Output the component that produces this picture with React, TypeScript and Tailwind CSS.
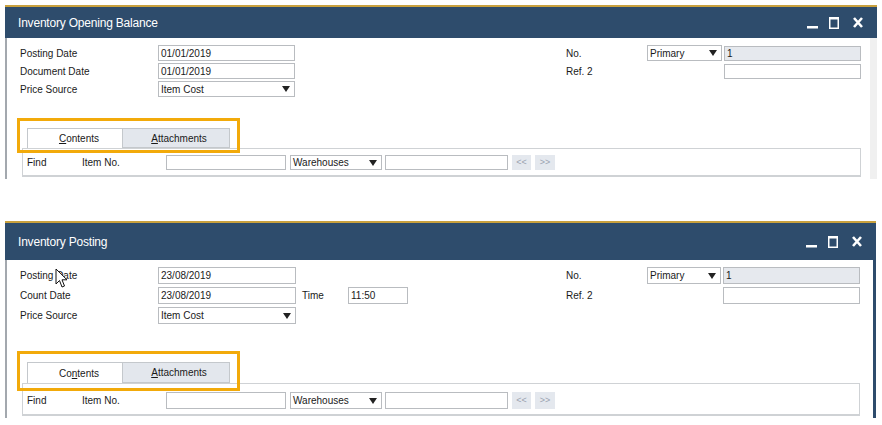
import React from "react";

const FONT = { fontFamily: '"Liberation Sans", Arial, sans-serif' };

function Controls() {
  return (
    <div className="ml-auto flex items-center gap-[11px] pr-[14px]">
      <svg width="11" height="12" viewBox="0 0 11 12">
        <rect x="0" y="9" width="11" height="2.5" fill="#fff" />
      </svg>
      <svg width="10" height="12" viewBox="0 0 10 12" className="mr-[3px]">
        <rect x="0.75" y="0.75" width="8.5" height="10.5" fill="none" stroke="#fff" strokeWidth="1.5" />
        <rect x="0" y="0" width="10" height="2.5" fill="#fff" />
      </svg>
      <svg width="10" height="11" viewBox="0 0 10 11">
        <path d="M1 1 L9 10 M9 1 L1 10" stroke="#fff" strokeWidth="2.6" />
      </svg>
    </div>
  );
}

function Input({ value, w, h, gray }: { value?: string; w: string; h: string; gray?: boolean }) {
  return (
    <div
      className={`${w} ${h} flex items-center border border-[#b9bcc0] pl-[2px] text-[10px] text-[#1a1a1a] ${
        gray ? "bg-[#e6e9ee]" : "bg-white"
      }`}
    >
      {value}
    </div>
  );
}

function Select({ value, w, h }: { value: string; w: string; h: string }) {
  return (
    <div className={`${w} ${h} flex items-center justify-between border border-[#b9bcc0] bg-white pl-[2px] pr-[4px] text-[10px] text-[#1a1a1a]`}>
      <span>{value}</span>
      <svg width="8" height="6" viewBox="0 0 8 6">
        <path d="M0 0 L8 0 L4 6 Z" fill="#222" />
      </svg>
    </div>
  );
}

function FindRow({ h }: { h: string }) {
  return (
    <div className="flex items-center text-[10px] text-[#1a1a1a]">
      <div className="w-[55px]">Find</div>
      <div className="w-[84px]">Item No.</div>
      <Input w="w-[120px]" h={h} />
      <div className="ml-[4px]">
        <Select value="Warehouses" w="w-[92px]" h={h} />
      </div>
      <div className="ml-[3px]">
        <Input w="w-[123px]" h={h} />
      </div>
      <div className={`ml-[4px] flex w-[19px] ${h} items-center justify-center bg-[#e4e8ee] text-[9px] text-[#9aa2ae]`}>&lt;&lt;</div>
      <div className={`ml-[4px] flex w-[20px] ${h} items-center justify-center bg-[#e4e8ee] text-[9px] text-[#9aa2ae]`}>&gt;&gt;</div>
    </div>
  );
}

function Tabs({ second, h }: { second?: boolean; h: string }) {
  return (
    <div className={`ml-[7px] flex ${h} text-[10px] text-[#1a1a1a]`}>
      <div className="flex w-[96px] items-center justify-center border border-b-0 border-[#c4c8cc] bg-white pl-[8px]">
        {second ? (
          <span>
            Co<span className="underline">n</span>tents
          </span>
        ) : (
          <span>
            <span className="underline">C</span>ontents
          </span>
        )}
      </div>
      <div className="flex w-[107px] items-center justify-center border border-l-0 border-[#c4c8cc] bg-[#e3e7ed] pl-[6px]">
        <span>
          <span className="underline">A</span>ttachments
        </span>
      </div>
    </div>
  );
}

function Highlight({ top, h }: { top: string; h: string }) {
  return <div className={`absolute left-[10px] ${top} w-[223px] ${h} border-[3px] border-[#f2aa0a]`} />;
}

function Cursor() {
  return (
    <svg className="absolute left-[48px] top-[8px]" width="13" height="21" viewBox="0 0 13 21">
      <path d="M1 1 L1 16 L4.5 12.5 L7 19 L9.5 18 L7 11.8 L12 11.8 Z" fill="#fff" stroke="#111" strokeWidth="1" />
    </svg>
  );
}

export default function App() {
  return (
    <div className="h-[425px] w-[882px] overflow-hidden bg-white pt-[5px]" style={FONT}>
      {/* Inventory Opening Balance */}
      <div className="ml-[5px] w-[872px]">
        <div className="h-[2px] bg-[#c9a13e]" />
        <div className="flex h-[31px] items-center bg-[#2e4c6c] pl-[13px] text-[12px] text-white">
          <span className="tracking-[-0.2px]">Inventory Opening Balance</span>
          <Controls />
        </div>
        <div className="relative h-[141px] border-l-2 border-r-[7px] border-l-[#a3a8ae] border-r-[#f0f0f0] pl-[13px] pr-[9px] pt-[7px] text-[10px] text-[#1a1a1a]">
          <div className="flex flex-col gap-[2px]">
            <div className="flex h-[16px] items-center">
              <div className="w-[138px]">Posting Date</div>
              <Input value="01/01/2019" w="w-[137px]" h="h-[16px]" />
              <div className="ml-auto flex items-center">
                <div className="w-[81px]">No.</div>
                <Select value="Primary" w="w-[75px]" h="h-[16px]" />
                <div className="ml-[2px]">
                  <Input value="1" w="w-[137px]" h="h-[15px]" gray />
                </div>
              </div>
            </div>
            <div className="flex h-[16px] items-center">
              <div className="w-[138px]">Document Date</div>
              <Input value="01/01/2019" w="w-[137px]" h="h-[16px]" />
              <div className="ml-auto flex items-center">
                <div className="w-[158px]">Ref. 2</div>
                <Input w="w-[137px]" h="h-[15px]" />
              </div>
            </div>
            <div className="flex h-[16px] items-center">
              <div className="w-[138px]">Price Source</div>
              <Select value="Item Cost" w="w-[137px]" h="h-[16px]" />
            </div>
          </div>
          <div className="mt-[31px]">
            <Tabs h="h-[20px]" />
            <div className="ml-[2px] h-[29px] border border-b-2 border-[#cfd2d5] pl-[4px] pt-[6px]">
              <FindRow h="h-[15px]" />
            </div>
          </div>
          <Highlight top="top-[80px]" h="h-[35px]" />
        </div>
      </div>

      {/* Inventory Posting */}
      <div className="ml-[5px] mt-[42px] w-[871px]">
        <div className="h-[2px] bg-[#c9a13e]" />
        <div className="flex h-[37px] items-center bg-[#2e4c6c] pl-[13px] text-[12px] text-white">
          <span className="tracking-[-0.2px]">Inventory Posting</span>
          <Controls />
        </div>
        <div className="relative h-[158px] border-l-2 border-r-[3px] border-l-[#a3a8ae] border-r-[#2e4c6c] pl-[13px] pr-[13px] pt-[7px] text-[10px] text-[#1a1a1a]">
          <div className="flex flex-col gap-[3px]">
            <div className="flex h-[17px] items-center">
              <div className="w-[138px]">Posting Date</div>
              <Input value="23/08/2019" w="w-[138px]" h="h-[17px]" />
              <div className="ml-auto flex items-center">
                <div className="w-[81px]">No.</div>
                <Select value="Primary" w="w-[74px]" h="h-[17px]" />
                <div className="ml-[2px]">
                  <Input value="1" w="w-[137px]" h="h-[17px]" gray />
                </div>
              </div>
            </div>
            <div className="flex h-[17px] items-center">
              <div className="w-[138px]">Count Date</div>
              <Input value="23/08/2019" w="w-[138px]" h="h-[17px]" />
              <div className="ml-[6px] w-[46px]">Time</div>
              <Input value="11:50" w="w-[60px]" h="h-[17px]" />
              <div className="ml-auto flex items-center">
                <div className="w-[157px]">Ref. 2</div>
                <Input w="w-[137px]" h="h-[17px]" />
              </div>
            </div>
            <div className="flex h-[17px] items-center">
              <div className="w-[138px]">Price Source</div>
              <Select value="Item Cost" w="w-[138px]" h="h-[17px]" />
            </div>
          </div>
          <div className="mt-[38px]">
            <Tabs second h="h-[21px]" />
            <div className="ml-[2px] h-[33px] border border-b-2 border-[#cfd2d5] pl-[4px] pt-[8px]">
              <FindRow h="h-[17px]" />
            </div>
          </div>
          <Highlight top="top-[91px]" h="h-[40px]" />
          <Cursor />
        </div>
      </div>
    </div>
  );
}
